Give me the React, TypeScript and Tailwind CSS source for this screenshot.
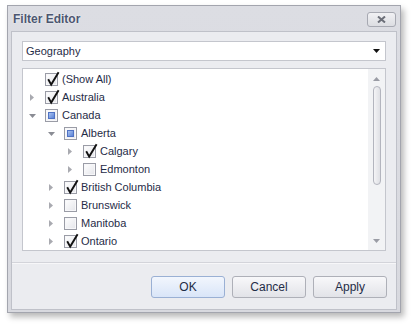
import React from "react";

type CheckState = "checked" | "unchecked" | "mixed";
type Expander = "none" | "collapsed" | "expanded";

type Row = {
  label: string;
  level: number;
  state: CheckState;
  expander: Expander;
};

const rows: Row[] = [
  { label: "(Show All)", level: 0, state: "checked", expander: "none" },
  { label: "Australia", level: 0, state: "checked", expander: "collapsed" },
  { label: "Canada", level: 0, state: "mixed", expander: "expanded" },
  { label: "Alberta", level: 1, state: "mixed", expander: "expanded" },
  { label: "Calgary", level: 2, state: "checked", expander: "collapsed" },
  { label: "Edmonton", level: 2, state: "unchecked", expander: "collapsed" },
  { label: "British Columbia", level: 1, state: "checked", expander: "collapsed" },
  { label: "Brunswick", level: 1, state: "unchecked", expander: "collapsed" },
  { label: "Manitoba", level: 1, state: "unchecked", expander: "collapsed" },
  { label: "Ontario", level: 1, state: "checked", expander: "collapsed" },
];

const indent = ["pl-0", "pl-[19px]", "pl-[38px]"];

const font = { fontFamily: '"Liberation Sans", Arial, sans-serif' };

const Arrow = ({ kind }: { kind: Expander }) => {
  if (kind === "collapsed")
    return (
      <svg width="4" height="7" viewBox="0 0 4 7" className="ml-[7px]">
        <polygon points="0,0 4,3.5 0,7" fill="#a9aab0" />
      </svg>
    );
  if (kind === "expanded")
    return (
      <svg width="7" height="4" viewBox="0 0 7 4" className="ml-[6px] mt-[1px]">
        <polygon points="0,0 7,0 3.5,4" fill="#8a8c94" />
      </svg>
    );
  return null;
};

const CheckBox = ({ state }: { state: CheckState }) => (
  <span className="relative block w-[13px] h-[13px] border border-[#9a9ca6] bg-gradient-to-br from-[#ffffff] to-[#e4e5ea] shrink-0">
    <span className="absolute inset-0 border border-[#f7f7f9]" />
    {state === "mixed" && (
      <span className="absolute left-[2px] top-[2px] w-[7px] h-[7px] border border-[#4f72c4] bg-gradient-to-br from-[#a9c2f0] to-[#5b82d6]" />
    )}
    {state === "checked" && (
      <svg
        width="14"
        height="17"
        viewBox="0 0 14 17"
        className="absolute left-[0px] top-[-4px]"
      >
        <path
          d="M2.2 9.2 L5.2 14.6 L12.6 2.2"
          fill="none"
          stroke="#111"
          strokeWidth="1.9"
          strokeLinejoin="miter"
        />
      </svg>
    )}
  </span>
);

const Btn = ({ label, primary }: { label: string; primary?: boolean }) => (
  <button
    className={`w-[74px] h-[22px] rounded-[3px] border text-[12px] text-[#1f2c47] ${
      primary
        ? "border-[#9ab0d4] bg-gradient-to-b from-[#f2f6fd] to-[#d9e5f8]"
        : "border-[#aeb0b8] bg-gradient-to-b from-[#f8f8fa] to-[#e2e3e8]"
    }`}
    style={font}
  >
    {label}
  </button>
);

export default function App() {
  return (
    <div className="w-[414px] h-[330px] bg-white pl-[7px] pt-[5px]" style={font}>
      <div className="w-[394px] h-[308px] flex flex-col border border-[#a3a5ae] bg-gradient-to-b from-[#dcdde3] to-[#d8d9df] shadow-[3px_4px_6px_rgba(0,0,0,0.28)]">
        {/* title bar */}
        <div className="h-[25px] flex items-center pl-[5px] pr-[4px]">
          <span className="text-[12px] font-bold text-[#4c5670] [text-shadow:0_0_2px_#ffffff]">
            Filter Editor
          </span>
          <span className="ml-auto mt-[2px] w-[29px] h-[15px] rounded-[3px] border border-[#a7a9b2] bg-gradient-to-b from-[#f1f1f4] to-[#dcdde2] flex items-center justify-center">
            <svg width="9" height="7" viewBox="0 0 9 7">
              <path d="M1 0.5 L8 6.5 M8 0.5 L1 6.5" stroke="#6c6f79" strokeWidth="2" />
            </svg>
          </span>
        </div>

        {/* client */}
        <div className="mx-[3px] mb-[2px] flex-1 flex flex-col border border-[#bfc1c9] bg-[#ebecf0]">
          <div className="px-[10px] pt-[9px]">
            <div className="h-[20px] flex items-center border border-[#c4c6cd] bg-white pl-[3px] pr-[5px]">
              <span className="text-[11px] text-[#1f2c47]">Geography</span>
              <svg width="7" height="4" viewBox="0 0 7 4" className="ml-auto">
                <polygon points="0,0 7,0 3.5,4" fill="#111" />
              </svg>
            </div>

            <div className="mt-[7px] h-[183px] flex border border-[#c4c6cd] bg-white">
              <div className="flex-1 pt-[1px]">
                {rows.map((r) => (
                  <div key={r.label} className={`h-[18px] flex items-center ${indent[r.level]}`}>
                    <span className="w-[22px] flex items-center">
                      <Arrow kind={r.expander} />
                    </span>
                    <CheckBox state={r.state} />
                    <span className="ml-[4px] text-[11px] text-[#1f2c47] whitespace-nowrap">
                      {r.label}
                    </span>
                  </div>
                ))}
              </div>
              {/* scrollbar */}
              <div className="w-[17px] bg-[#f2f3f5] flex flex-col items-center">
                <svg width="7" height="4" viewBox="0 0 7 4" className="mt-[8px]">
                  <polygon points="3.5,0 7,4 0,4" fill="#9a9ca5" />
                </svg>
                <div className="mt-[5px] w-[8px] h-[99px] rounded-full border border-[#b3b5be] bg-gradient-to-r from-[#f4f4f6] to-[#dfe0e5]" />
                <svg width="7" height="4" viewBox="0 0 7 4" className="mt-auto mb-[7px]">
                  <polygon points="0,0 7,0 3.5,4" fill="#9a9ca5" />
                </svg>
              </div>
            </div>
          </div>

          <div className="mt-[11px] h-[1px] bg-[#d3d4da] border-b border-[#f7f7f9] box-content" />

          <div className="flex justify-end gap-[7px] pr-[9px] pt-[12px]">
            <Btn label="OK" primary />
            <Btn label="Cancel" />
            <Btn label="Apply" />
          </div>
        </div>
      </div>
    </div>
  );
}
